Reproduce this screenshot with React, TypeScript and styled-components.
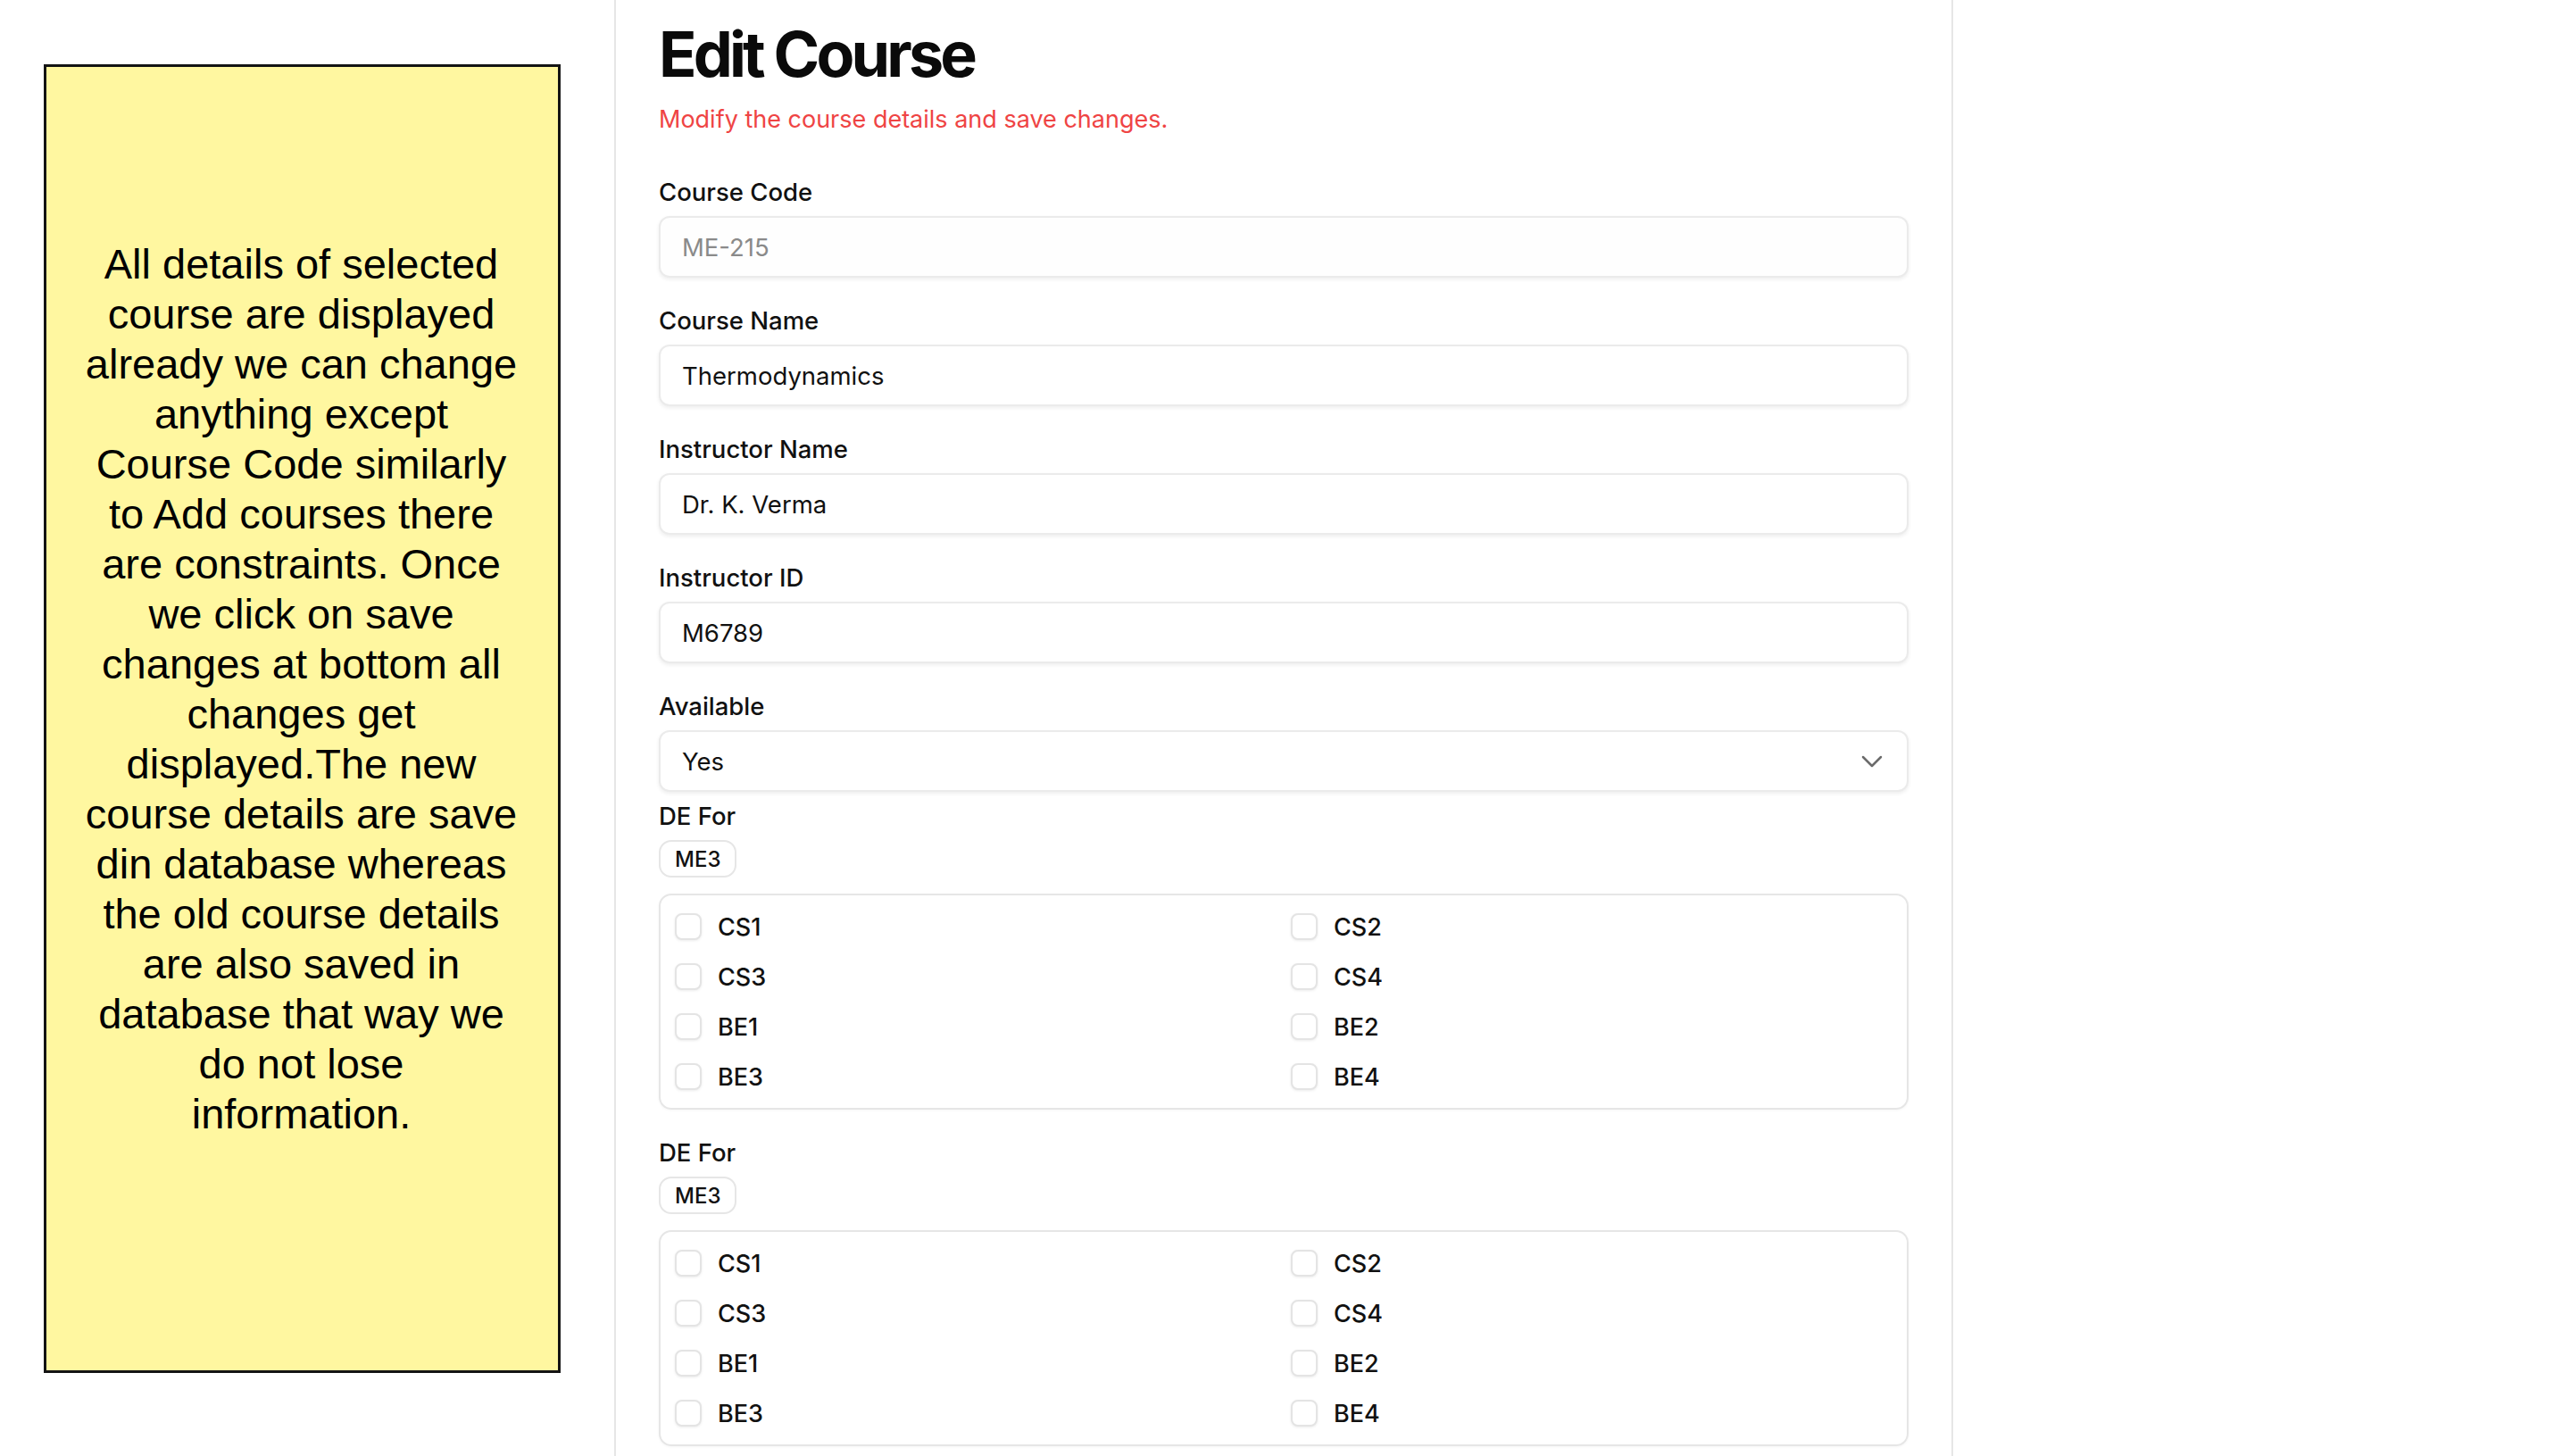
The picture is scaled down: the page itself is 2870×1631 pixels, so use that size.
import React from "react";
import styled, { createGlobalStyle } from "styled-components";
import { ChevronDown } from "lucide-react";

const GlobalStyle = createGlobalStyle`
  html, body {
    margin: 0;
    padding: 0;
    background: #ffffff;
  }
  body {
    font-family: Inter, "Noto Sans", "Liberation Sans", sans-serif;
    color: #0a0a0a;
  }
  * { box-sizing: border-box; }
`;

const Page = styled.div`
  display: flex;
  align-items: stretch;
  height: 1631px;
  overflow: hidden;
  background: #ffffff;
`;

const NoteColumn = styled.aside`
  flex: 0 0 auto;
  padding: 72px 0 0 49px;
`;

const NoteBox = styled.div`
  width: 579px;
  height: 1466px;
  background: #fff7a0;
  border: 3px solid #141414;
  padding: 193px 6px 0 4px;
  font-family: "Liberation Sans", Arial, sans-serif;
  font-size: 47px;
  line-height: 56px;
  text-align: center;
  color: #000;
`;

const Panel = styled.main`
  flex: 0 0 1500px;
  margin-left: 60px;
  border-left: 2px solid #e6e6e6;
  border-right: 2px solid #e6e6e6;
  padding: 21px 48px 0;
`;

const Title = styled.h1`
  margin: 0;
  font-size: 70px;
  line-height: 80px;
  font-weight: 700;
  letter-spacing: -0.055em;
  color: #0a0a0a;
`;

const Subtitle = styled.p`
  margin: 15px 0 0;
  font-size: 27px;
  line-height: 36px;
  color: #ef4444;
`;

const Form = styled.form`
  margin-top: 45px;
  display: flex;
  flex-direction: column;
`;

const Field = styled.div<{ $after: number }>`
  display: flex;
  flex-direction: column;
  margin-bottom: ${(p) => p.$after}px;
`;

const Label = styled.label`
  display: block;
  font-size: 27.5px;
  line-height: 36px;
  font-weight: 500;
  color: #111;
  margin-bottom: 9px;
`;

const TextInput = styled.input`
  height: 69px;
  width: 100%;
  border: 2px solid #ebebeb;
  border-radius: 12px;
  padding: 0 24px;
  font-family: inherit;
  font-size: 27.5px;
  color: #111;
  background: #ffffff;
  box-shadow: 0 2px 4px rgba(0, 0, 0, 0.07);
  outline: none;

  &:disabled {
    color: #8a8a8a;
    -webkit-text-fill-color: #8a8a8a;
    background: #fefefe;
    opacity: 1;
  }
`;

const SelectBox = styled.div`
  height: 69px;
  border: 2px solid #ebebeb;
  border-radius: 12px;
  padding: 0 19px 0 24px;
  display: flex;
  align-items: center;
  justify-content: space-between;
  font-size: 27.5px;
  color: #111;
  background: #ffffff;
  box-shadow: 0 2px 4px rgba(0, 0, 0, 0.07);
  svg {
    color: #6b6b6b;
  }
`;

const Chip = styled.span`
  align-self: flex-start;
  display: inline-flex;
  align-items: center;
  height: 42px;
  padding: 0 16px;
  border: 2px solid #e6e6e6;
  border-radius: 14px;
  font-size: 24px;
  font-weight: 500;
  color: #111;
  margin-bottom: 18px;
`;

const OptionsBox = styled.div`
  border: 2px solid #e6e6e6;
  border-radius: 14px;
  padding: 16px;
  display: grid;
  grid-template-columns: 1fr 1fr;
  grid-auto-rows: 38px;
  column-gap: 16px;
  row-gap: 18px;
  box-shadow: 0 1px 3px rgba(0, 0, 0, 0.04);
`;

const Option = styled.label`
  display: flex;
  align-items: center;
  gap: 18px;
  font-size: 27px;
  font-weight: 500;
  color: #111;
`;

const Check = styled.input`
  appearance: none;
  margin: 0;
  width: 30px;
  height: 30px;
  border: 2px solid #e4e4e4;
  border-radius: 8px;
  background: #fff;
  box-shadow: 0 1px 3px rgba(0, 0, 0, 0.08);
`;

const noteLines = [
  "All details of selected",
  "course are displayed",
  "already we can change",
  "anything except",
  "Course Code similarly",
  "to Add courses there",
  "are constraints. Once",
  "we click on save",
  "changes at bottom all",
  "changes get",
  "displayed.The new",
  "course details are save",
  "din database whereas",
  "the old course details",
  "are also saved in",
  "database that way we",
  "do not lose",
  "information.",
];

const options = ["CS1", "CS2", "CS3", "CS4", "BE1", "BE2", "BE3", "BE4"];

function DeSection({ after }: { after: number }) {
  return (
    <Field $after={after}>
      <Label>DE For</Label>
      <Chip>ME3</Chip>
      <OptionsBox>
        {options.map((o) => (
          <Option key={o}>
            <Check type="checkbox" />
            {o}
          </Option>
        ))}
      </OptionsBox>
    </Field>
  );
}

export default function App() {
  return (
    <>
      <GlobalStyle />
      <Page>
        <NoteColumn>
          <NoteBox>
            {noteLines.map((l, i) => (
              <React.Fragment key={i}>
                {l}
                {i < noteLines.length - 1 && <br />}
              </React.Fragment>
            ))}
          </NoteBox>
        </NoteColumn>
        <Panel>
          <Title>Edit Course</Title>
          <Subtitle>Modify the course details and save changes.</Subtitle>
          <Form onSubmit={(e) => e.preventDefault()}>
            <Field $after={30}>
              <Label>Course Code</Label>
              <TextInput defaultValue="ME-215" disabled />
            </Field>
            <Field $after={30}>
              <Label>Course Name</Label>
              <TextInput defaultValue="Thermodynamics" />
            </Field>
            <Field $after={30}>
              <Label>Instructor Name</Label>
              <TextInput defaultValue="Dr. K. Verma" />
            </Field>
            <Field $after={30}>
              <Label>Instructor ID</Label>
              <TextInput defaultValue="M6789" />
            </Field>
            <Field $after={9}>
              <Label>Available</Label>
              <SelectBox>
                <span>Yes</span>
                <ChevronDown size={40} strokeWidth={1.5} />
              </SelectBox>
            </Field>
            <DeSection after={30} />
            <DeSection after={30} />
          </Form>
        </Panel>
      </Page>
    </>
  );
}
